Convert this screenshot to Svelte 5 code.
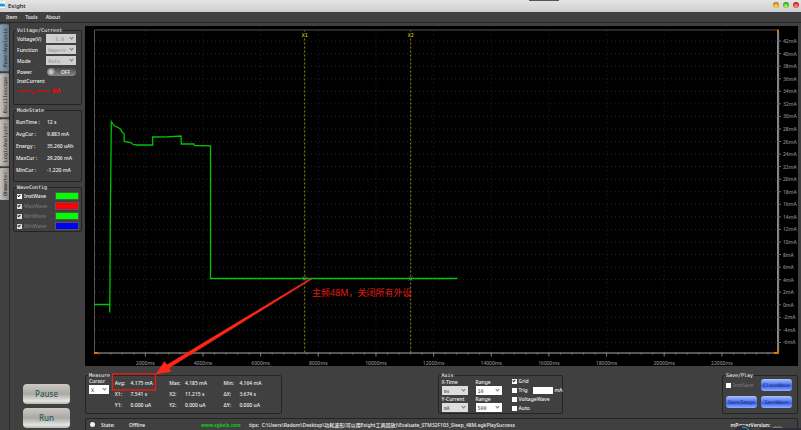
<script>
  let voltage = '3.8';
  let tab = 'PowerAnalysis';

  const menus = ['Item', 'Tools', 'About'];
  const tabs = ['PowerAnalysis', 'Oscilloscope', 'LogicAnalyzer', 'Ohmmeter'];

  const modeState = [
    ['RunTime :', '12 s'],
    ['AvgCur :', '9.883 mA'],
    ['Energy :', '35.260 uAh'],
    ['MaxCur :', '29.206 mA'],
    ['MinCur :', '-1.220 mA']
  ];

  const waves = [
    { name: 'InstWave', color: '#00ff00', on: true },
    { name: 'MaxWave', color: '#ff0000', on: false },
    { name: 'MinWave', color: '#00ff00', on: false },
    { name: 'MinWave', color: '#0000ff', on: false }
  ];

  const measures = [
    ['Avg:', '4.175 mA', 'Max:', '4.185 mA', 'Min:', '4.164 mA'],
    ['X1:', '7.541 s', 'X2:', '11.215 s', 'ΔX:', '3.674 s'],
    ['Y1:', '0.000 uA', 'Y2:', '0.000 uA', 'ΔY:', '0.000 uA']
  ];

  // Chart scales
  const xPos = (ms) => 2.7 + (ms * 57.65) / 2000;
  const yPos = (mA) => 278.3 - mA * 6.28;
  const range = (from, to, step) => {
    const out = [];
    for (let v = from; v <= to; v += step) out.push(v);
    return out;
  };
  const xTicks = range(2000, 22000, 2000);
  const xMinor = range(400, 23600, 400);
  const yTicks = range(-6, 42, 2);
  const yMinor = range(-18, 108, 1);

  const trace =
    '9,278 24.7,278 24.7,286 25,254 25.3,191 26,128 26.3,95 27,96 29,99 33,101 36,103 36.5,105 39,107 39.3,115 46,116 48,118 52,118.5 67.7,118.5 67.7,110.5 81,110.3 96,109.5 96.3,117.5 109,117.5 109.5,119 125.5,119.3 125.5,252 372.5,252';
  const cursors = [
    { name: 'X1', x: 219.7 },
    { name: 'X2', x: 325.7 }
  ];
</script>

<div class="window">
  <header class="titlebar">
    <svg class="logo" viewBox="0 0 6 8">
      <path d="M0 1h3l2 -1v7h-5z" fill="#fff" />
      <path d="M0 2.500h4l1 1v2h-5z" fill="#1b9dd0" />
    </svg>
    <h1>Esight</h1>
    <span class="drag-handle"></span>
    <div class="window-buttons">
      <button class="light amber" aria-label="Minimize"></button>
      <button class="light green" aria-label="Maximize"></button>
      <button class="light red" aria-label="Close"></button>
    </div>
  </header>

  <nav class="menubar">
    {#each menus as item}
      <button>{item}</button>
    {/each}
  </nav>

  <div class="body">
    <div class="tabs" role="tablist">
      {#each tabs as name}
        <button role="tab" aria-selected={tab === name} class:active={tab === name} on:click={() => (tab = name)}>
          {name}
        </button>
      {/each}
    </div>

    <aside class="sidebar">
      <fieldset class="source">
        <legend>Voltage/Current</legend>
        <div class="row">
          <label for="voltage">Voltage(V)</label>
          <span class="select off"><select id="voltage" class="centered" disabled><option>{voltage}</option></select></span>
        </div>
        <div class="row">
          <label for="function">Function</label>
          <span class="select off"><select id="function" disabled><option>Ampere</option></select></span>
        </div>
        <div class="row">
          <label for="mode">Mode</label>
          <span class="select off"><select id="mode" disabled><option>Auto</option></select></span>
        </div>
        <div class="row">
          <span>Power</span>
          <button class="switch">OFF</button>
        </div>
        <div class="inst-label">InstCurrent</div>
        <div class="inst-value">
          <svg viewBox="0 0 30 6">
            <path d="M0 3H12M17 3H30" stroke="#f00" stroke-width="1.2" />
            <path d="M13 4h2v2h-2z" fill="#f00" />
          </svg>
          <b>mA</b>
        </div>
      </fieldset>

      <fieldset class="state">
        <legend>ModeState</legend>
        <table>
          <tbody>
            {#each modeState as [label, value]}
              <tr><th scope="row">{label}</th><td>{value}</td></tr>
            {/each}
          </tbody>
        </table>
      </fieldset>

      <fieldset class="waves">
        <legend>WaveConfig</legend>
        {#each waves as wave}
          <div class="wave">
            <label class:dim={!wave.on}><input type="checkbox" checked disabled={!wave.on} />{wave.name}</label>
            <span class="swatch" style="background: {wave.color}"></span>
          </div>
        {/each}
      </fieldset>

      <div class="actions">
        <button>Pause</button>
        <button>Run</button>
      </div>
    </aside>

    <main>
      <div class="chart">
        <svg viewBox="0 0 713 339" role="img" aria-label="Current over time">
          <g class="grid">
            {#each xTicks as t}
              <line x1={xPos(t)} x2={xPos(t)} y1="4" y2="326" />
            {/each}
            {#each yTicks as t}
              <line x1="10" x2="692" y1={yPos(t)} y2={yPos(t)} />
            {/each}
          </g>

          <path d="M9.500 326V3.500H692" fill="none" stroke="#555" />
          <path d="M9 326.500H692.500" stroke="#aaa" />
          <path d="M693 4V327" stroke="#888" stroke-width="2" />
          <path d="M9 326.500h4M689 326.500h4M693 3v4M693 322v5" stroke="#d87a00" stroke-width="2" />

          <g stroke="#777">
            {#each xMinor as t}
              <line x1={xPos(t)} x2={xPos(t)} y1="326" y2="328" />
            {/each}
            {#each xTicks as t}
              <line x1={xPos(t)} x2={xPos(t)} y1="326" y2="330" />
            {/each}
            {#each yTicks as t}
              <line x1="692" x2="696" y1={yPos(t)} y2={yPos(t)} />
            {/each}
          </g>
          <g stroke="#666" stroke-width="0.5">
            {#each yMinor as t}
              <line x1="693" x2="695" y1={yPos(t * 0.4)} y2={yPos(t * 0.4)} />
            {/each}
          </g>

          <g class="tick-label">
            {#each xTicks as t}
              <text x={xPos(t)} y="338" text-anchor="middle">{t}ms</text>
            {/each}
            {#each yTicks as t}
              <text x="698" y={yPos(t) + 2}>{t}mA</text>
            {/each}
          </g>

          <polyline points={trace} fill="none" stroke="#00c400" stroke-width="1.3" />

          {#each cursors as c}
            <line x1={c.x} x2={c.x} y1="4" y2="326" stroke="#8c8c14" stroke-dasharray="2 2" />
            <rect x={c.x - 3} y="5" width="6" height="6" fill="#000" />
            <text class="cursor-name" x={c.x} y="10" text-anchor="middle">{c.name}</text>
            <path d="M{c.x - 2} 250l4 4m0 -4l-4 4" stroke="#4d7088" />
          {/each}

          <text class="note" lang="zh-CN" x="227" y="269">主频48M，关闭所有外设</text>
          <path d="M226.500 252.800L84 341.500L86 345L71 347.500L79.500 335L82 338.300L226 251.800z" fill="#ff2616" stroke="#ff2616" stroke-width="0.5" />
          <rect x="27.500" y="347.500" width="43" height="16" fill="none" stroke="#f01c12" stroke-width="1.3" />
        </svg>
      </div>

      <div class="panels">
        <fieldset class="measure">
          <legend>Measure</legend>
          <div class="cursor-pick">
            <label for="cursor">Cursor</label>
            <span class="select"><select id="cursor"><option>X</option></select></span>
          </div>
          <table>
            <tbody>
              {#each measures as cells}
                <tr>
                  {#each cells as cell, i}
                    {#if i % 2 === 0}<th scope="row">{cell}</th>{:else}<td>{cell}</td>{/if}
                  {/each}
                </tr>
              {/each}
            </tbody>
          </table>
        </fieldset>

        <fieldset class="axis">
          <legend>Axis</legend>
          <div class="axis-grid">
            <label for="xtime">X-Time</label>
            <label for="xrange">Range</label>
            <span class="select grey"><select id="xtime"><option>ms</option></select></span>
            <span class="select"><select id="xrange"><option>10</option></select></span>
            <label for="ycurrent">Y-Current</label>
            <label for="yrange">Range</label>
            <span class="select grey"><select id="ycurrent"><option>mA</option></select></span>
            <span class="select"><select id="yrange"><option>500</option></select></span>
          </div>
          <div class="options">
            <label><input type="checkbox" checked />Grid</label>
            <div class="trig">
              <label><input type="checkbox" />Trig</label>
              <input type="text" aria-label="Trigger level" />
              <span>mA</span>
            </div>
            <label><input type="checkbox" />VoltageWave</label>
            <label><input type="checkbox" />Auto</label>
          </div>
        </fieldset>

        <fieldset class="save">
          <legend>Save/Play</legend>
          <div class="save-grid">
            <label class="dim"><input type="checkbox" />InstSave</label>
            <button>CloseWave</button>
            <button>SaveImage</button>
            <button>SaveWave</button>
          </div>
        </fieldset>
      </div>

      <footer class="status">
        <span class="led"></span>
        <span class="status-label">State:</span>
        <span class="status-value">Offline</span>
        <a href="http://www.egkelx.com">www.egkelx.com</a>
        <span class="tips">tips:&nbsp; C:\Users\Radom\Desktop\功耗波形(可以用Esight工具回放)\Evaluate_STM32F103_Sleep_48M.egkPlaySuccess</span>
        <span class="version">mPowerVersion:&nbsp; _._._</span>
        <svg class="widget" viewBox="0 0 72 7">
          <path d="M31 7V5H72V7z" fill="#2c2d35" />
          <circle cx="14" cy="11" r="9" fill="#2b3040" />
          <path d="M13 4a8 8 0 0 1 7 3" fill="none" stroke="#36b8b8" />
        </svg>
      </footer>
    </main>
  </div>
</div>

<style>
  :global(body) {
    background: #404040;
  }

  .window {
    display: flex;
    flex-direction: column;
    height: 100vh;
    overflow: hidden;
    background: #404040;
    color: #f0f0f0;
    font-family: 'Noto Sans', 'Noto Sans CJK SC', sans-serif;
    font-size: 5px;
    font-weight: 500;
    line-height: 6px;
  }

  button, select, input {
    margin: 0;
    padding: 0;
    border: 0;
    font: inherit;
    color: inherit;
  }

  .titlebar {
    position: relative;
    display: flex;
    align-items: center;
    height: 12px;
    background: linear-gradient(#e4e4e4, #cfcfcf);
    color: #111;
  }

  .logo {
    width: 6px;
    height: 8px;
    margin-bottom: 2px;
  }

  h1 {
    margin: 0 0 0 2px;
    font-size: 6px;
    font-weight: 500;
  }

  .drag-handle {
    position: absolute;
    top: 0;
    left: 66%;
    width: 30px;
    height: 1px;
    background: #555;
  }

  .window-buttons {
    display: flex;
    gap: 4px;
    margin: 0 2px 2px auto;
  }

  .light {
    width: 6px;
    height: 6px;
    border-radius: 50%;
  }

  .amber { background: radial-gradient(circle at 50% 70%, #ffe680, #d88a14 60%, #8a5510); }
  .green { background: radial-gradient(circle at 50% 70%, #b6ff80, #44b41c 60%, #22700c); }
  .red { background: radial-gradient(circle at 50% 70%, #ffa0a0, #d42a2a 60%, #8a1010); }

  .menubar {
    display: flex;
    gap: 8px;
    height: 10px;
    padding-left: 6px;
    border-bottom: 1px solid #262626;
  }

  .menubar button {
    background: none;
  }

  .body {
    display: flex;
    flex: 1;
    min-height: 0;
  }

  .tabs {
    display: flex;
    flex-direction: column;
    gap: 2px;
    width: 9px;
    padding-top: 1px;
    border-right: 1px solid #2a2a2a;
  }

  .tabs button {
    padding: 4px 2px 4px 1px;
    writing-mode: vertical-rl;
    transform: rotate(180deg);
    background: linear-gradient(90deg, #8e8a86, #c4c0bb);
    color: #222;
    font: 5px/6px 'DejaVu Sans Mono', monospace;
    border-radius: 1px;
  }

  .tabs .active {
    background: linear-gradient(90deg, #62788c, #8ba1b5);
  }

  .sidebar {
    display: flex;
    flex-direction: column;
    width: 69px;
    padding: 4px 3px 2px;
  }

  fieldset {
    margin: 0;
    min-width: 0;
    padding: 0 3px;
    border: 1px solid #242424;
    border-radius: 2px;
  }

  legend {
    margin-left: -1px;
    padding: 0 1px;
    font: 5px/6px 'DejaVu Sans Mono', monospace;
    color: #fff;
  }

  .source {
    height: 78px;
    box-sizing: border-box;
  }

  .row {
    display: flex;
    align-items: center;
    justify-content: space-between;
    height: 9px;
    margin: 1px 2px 2px 0;
  }

  .select {
    position: relative;
    display: flex;
    width: 26px;
    height: 9px;
    background: #fff;
    color: #333;
  }

  .select::after {
    content: '';
    position: absolute;
    right: 3px;
    top: 2px;
    width: 2px;
    height: 2px;
    border: solid #777;
    border-width: 0 1px 1px 0;
    transform: rotate(45deg);
    pointer-events: none;
  }

  .select select {
    width: 100%;
    padding-left: 2px;
    appearance: none;
    background: none;
    font: 5px/6px 'DejaVu Sans Mono', monospace;
  }

  .select.grey {
    background: #ddd;
  }

  .select.off {
    width: 30px;
    background: #cfcfcf;
    color: #8c8c8c;
  }

  .off select {
    opacity: 1;
  }

  .select .centered {
    padding-left: 9px;
  }

  .switch {
    width: 29px;
    height: 8px;
    padding-left: 8px;
    border-radius: 4px;
    background: radial-gradient(circle at 4px 4px, #ccc 1px, #777 4px, transparent 5px), linear-gradient(#4a4a4a, #8a8a8a);
    color: #eee;
    line-height: 8px;
  }

  .inst-label {
    margin-top: 1px;
  }

  .inst-value {
    display: flex;
    align-items: center;
    gap: 3px;
    margin-top: 3px;
    padding-left: 2px;
    color: #f00;
    font: 7px/8px 'Liberation Mono', monospace;
  }

  .inst-value svg {
    flex: none;
    width: 30px;
    height: 6px;
  }

  table {
    border-collapse: collapse;
  }

  th, td {
    padding: 0;
    font-weight: 500;
    text-align: left;
    white-space: nowrap;
  }

  .state {
    margin-top: 2px;
    height: 75px;
    box-sizing: border-box;
  }

  .state table {
    margin: 3px 0 0 -1px;
  }

  .state th {
    width: 31px;
    height: 12px;
  }

  .waves {
    margin-top: 2px;
    padding: 1px 3px 0;
  }

  .wave {
    display: flex;
    align-items: center;
    justify-content: space-between;
    height: 10px;
  }

  label {
    display: flex;
    align-items: center;
  }

  .dim {
    color: #777;
  }

  .swatch {
    width: 22px;
    height: 6px;
    border: 1px solid #555;
    margin-right: -1px;
  }

  input[type='checkbox'] {
    appearance: none;
    width: 5px;
    height: 5px;
    margin-right: 2px;
    background: #fff;
  }

  input[type='checkbox']:checked::after {
    content: '';
    display: block;
    width: 1px;
    height: 2px;
    margin: 0 0 0 1px;
    border: solid #223;
    border-width: 0 1px 1px 0;
    transform: rotate(45deg);
  }

  input[type='checkbox']:disabled {
    background: #ddd;
  }

  .actions {
    display: flex;
    flex-direction: column;
    gap: 4px;
    width: 47px;
    margin: auto auto 0 10px;
  }

  .actions button {
    height: 20px;
    border-radius: 4px;
    background: linear-gradient(#cdc8c3, #aaa8a5 50%, #e4e6e2 85%, #b4b4b0);
    color: #2f5a5a;
    font-size: 8px;
    font-weight: 500;
  }

  main {
    display: flex;
    flex: 1;
    flex-direction: column;
    min-width: 0;
    padding: 3px 3px 0 0;
  }

  .chart {
    position: relative;
    z-index: 1;
    flex: 1;
    min-height: 0;
    background: #000;
  }

  .chart svg {
    display: block;
    width: 100%;
    height: 100%;
    overflow: visible;
    pointer-events: none;
  }

  .grid {
    stroke: #262626;
    stroke-dasharray: 1 3;
  }

  .tick-label {
    fill: #8c8c8c;
    font-size: 5px;
  }

  .cursor-name {
    fill: #e8e800;
    font: 5px 'DejaVu Sans Mono', monospace;
  }

  .note {
    fill: #e01c10;
    font-size: 9px;
    font-weight: 400;
  }

  .panels {
    display: flex;
    align-items: stretch;
    justify-content: space-between;
    margin-top: 6px;
    height: 42px;
  }

  .measure {
    display: flex;
    align-items: flex-start;
    width: 197px;
    box-sizing: border-box;
  }

  .cursor-pick {
    width: 26px;
  }

  .cursor-pick .select {
    width: 20px;
    margin-top: 1px;
  }

  .measure table {
    margin-top: -1px;
  }

  .measure th {
    width: 16px;
    height: 11px;
  }

  .measure td {
    width: 39px;
  }

  .axis {
    display: flex;
    gap: 10px;
    width: 125px;
    box-sizing: border-box;
    margin-left: -4px;
  }

  .axis-grid {
    display: grid;
    grid-template-columns: 26px 26px;
    column-gap: 8px;
    row-gap: 0;
    align-content: start;
  }

  .axis-grid label {
    height: 8px;
    white-space: nowrap;
  }

  .options {
    display: flex;
    flex-direction: column;
    gap: 3px;
  }

  .trig {
    display: flex;
    align-items: center;
    gap: 2px;
    height: 6px;
  }

  .trig label {
    width: 19px;
  }

  .trig input[type='text'] {
    width: 20px;
    height: 7px;
    background: #fff;
  }

  .save {
    width: 76px;
    box-sizing: border-box;
  }

  .save-grid {
    display: grid;
    grid-template-columns: 31px 31px;
    gap: 5px 4px;
    margin-top: 1px;
  }

  .save button {
    height: 12px;
    border-radius: 3px;
    background: linear-gradient(#a8c4ff, #4a6ee8 50%, #3c64f0 60%, #8cb0ff);
    color: #1c2c70;
    font: 5px/6px 'DejaVu Sans Mono', monospace;
  }

  .status {
    position: relative;
    display: flex;
    align-items: center;
    height: 12px;
    margin-top: 4px;
    padding-left: 4px;
    border: 1px solid #242424;
    border-bottom: 0;
    border-radius: 2px 2px 0 0;
    box-sizing: border-box;
    white-space: nowrap;
  }

  .led {
    width: 5px;
    height: 5px;
    margin-right: 6px;
    border-radius: 50%;
    background: #e8f6ff;
  }

  .status-label {
    width: 28px;
  }

  .status-value {
    width: 72px;
  }

  .status a {
    width: 48px;
    color: #16c416;
    font-style: italic;
    font-weight: 700;
    text-decoration: none;
  }

  .version {
    margin-left: auto;
    margin-right: 15px;
    font-weight: 600;
  }

  .widget {
    position: absolute;
    right: -4px;
    bottom: 0;
    width: 72px;
    height: 7px;
  }
</style>
